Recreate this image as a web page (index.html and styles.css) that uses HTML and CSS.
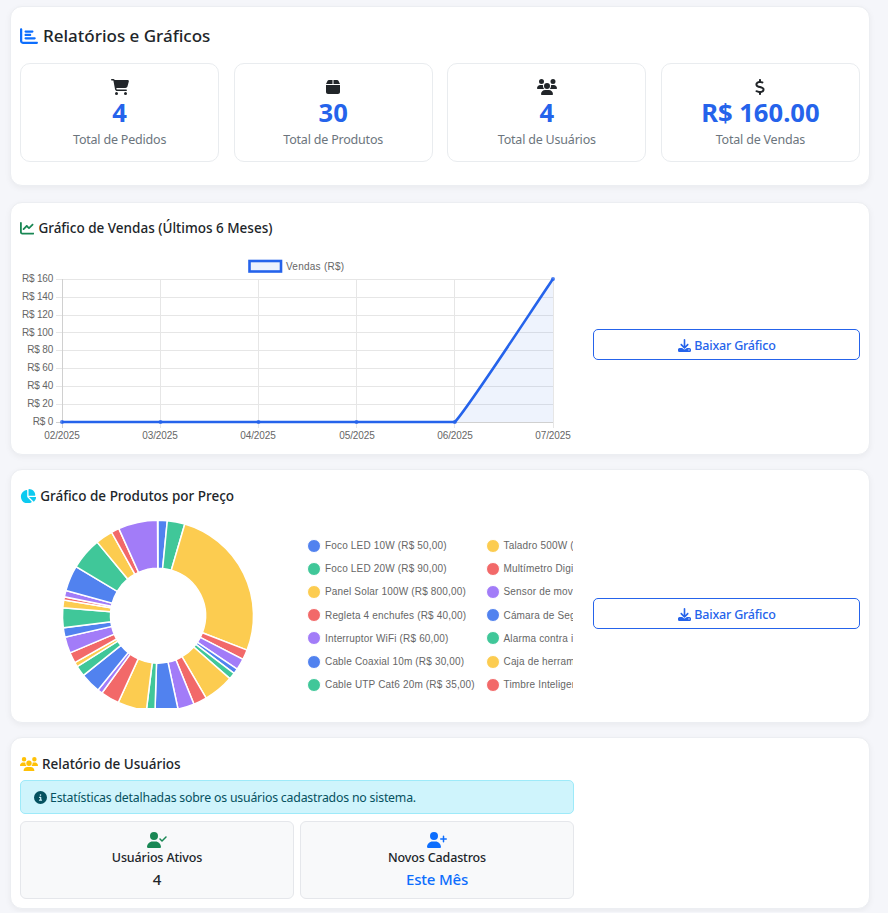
FILE: index.html
```html
<!DOCTYPE html>
<html lang="pt-BR">
<head>
  <meta charset="UTF-8">
  <title>Relatórios e Gráficos</title>
  <link rel="stylesheet" href="styles.css">
</head>
<body>

<div class="page">

  <section class="card card-summary">
    <h2 class="page-title">
      <svg class="icon text-primary" viewBox="0 0 512 512"><path d="M32 32c17.7 0 32 14.3 32 32V400c0 8.8 7.2 16 16 16H480c17.7 0 32 14.3 32 32s-14.3 32-32 32H80c-44.2 0-80-35.8-80-80V64C0 46.3 14.3 32 32 32zm96 96c0-17.7 14.3-32 32-32l192 0c17.7 0 32 14.3 32 32s-14.3 32-32 32l-192 0c-17.7 0-32-14.3-32-32zm32 64H288c17.7 0 32 14.3 32 32s-14.3 32-32 32H160c-17.7 0-32-14.3-32-32s14.3-32 32-32zm0 96H416c17.7 0 32 14.3 32 32s-14.3 32-32 32H160c-17.7 0-32-14.3-32-32s14.3-32 32-32z"/></svg>
      Relatórios e Gráficos
    </h2>
    <div class="stats">
      <div class="stat">
        <svg class="icon" viewBox="0 0 576 512"><path d="M0 24C0 10.7 10.7 0 24 0H69.5c22 0 41.5 12.8 50.6 32h411c26.3 0 45.5 25 38.6 50.4l-41 152.3c-8.5 31.4-37 53.3-69.5 53.3H170.7l5.4 28.5c2.2 11.3 12.1 19.5 23.6 19.5H488c13.3 0 24 10.7 24 24s-10.7 24-24 24H199.7c-34.6 0-64.3-24.6-70.7-58.5L77.4 54.5c-.7-3.8-4-6.5-7.9-6.5H24C10.7 48 0 37.3 0 24zM128 464a48 48 0 1 1 96 0 48 48 0 1 1 -96 0zm336-48a48 48 0 1 1 0 96 48 48 0 1 1 0-96z"/></svg>
        <div class="stat-value">4</div>
        <div class="stat-label">Total de Pedidos</div>
      </div>
      <div class="stat">
        <svg class="icon" viewBox="0 0 448 512"><path d="M50.7 58.5L0 160H208V32H93.7C75.5 32 58.9 42.3 50.7 58.5zM240 160H448L397.3 58.5C389.1 42.3 372.5 32 354.3 32H240V160zm208 32H0V416c0 35.3 28.7 64 64 64H384c35.3 0 64-28.7 64-64V192z"/></svg>
        <div class="stat-value">30</div>
        <div class="stat-label">Total de Produtos</div>
      </div>
      <div class="stat">
        <svg class="icon" viewBox="0 0 640 512"><path d="M144 0a80 80 0 1 1 0 160A80 80 0 1 1 144 0zM512 0a80 80 0 1 1 0 160A80 80 0 1 1 512 0zM0 298.7C0 239.8 47.8 192 106.7 192h42.7c15.9 0 31 3.5 44.6 9.7c-1.3 7.2-1.9 14.7-1.9 22.3c0 38.2 16.8 72.5 43.3 96c-.2 0-.4 0-.7 0H21.3C9.6 320 0 310.4 0 298.7zM405.3 320c-.2 0-.4 0-.7 0c26.6-23.5 43.3-57.8 43.3-96c0-7.6-.7-15-1.9-22.3c13.6-6.3 28.7-9.7 44.6-9.7h42.7C592.2 192 640 239.8 640 298.7c0 11.8-9.6 21.3-21.3 21.3H405.3zM224 224a96 96 0 1 1 192 0 96 96 0 1 1 -192 0zM128 485.3C128 411.7 187.7 352 261.3 352H378.7C452.3 352 512 411.7 512 485.3c0 14.7-11.9 26.7-26.7 26.7H154.7c-14.7 0-26.7-11.9-26.7-26.7z"/></svg>
        <div class="stat-value">4</div>
        <div class="stat-label">Total de Usuários</div>
      </div>
      <div class="stat">
        <svg class="icon" viewBox="0 0 320 512"><path d="M160 0c17.7 0 32 14.3 32 32V67.7c1.6 .2 3.1 .4 4.7 .7c.4 .1 .7 .1 1.1 .2l48 8.8c17.4 3.2 28.9 19.9 25.7 37.2s-19.9 28.9-37.2 25.7l-47.5-8.7c-31.3-4.6-58.9-1.5-78.3 6.2s-27.2 18.3-29 28.1c-2 10.7-.5 16.7 1.2 20.4c1.8 3.9 5.5 8.3 12.8 13.2c16.3 10.7 41.3 17.7 73.7 26.3l2.9 .8c28.6 7.6 63.6 16.8 89.6 33.8c14.2 9.3 27.6 21.9 35.9 39.5c8.5 17.9 10.3 37.9 6.4 59.2c-6.9 38-33.1 63.4-65.6 76.7c-13.7 5.6-28.6 9.2-44.4 11V480c0 17.7-14.3 32-32 32s-32-14.3-32-32V445.1c-.4-.1-.9-.1-1.3-.2l-.2 0 0 0c-24.4-3.8-64.5-14.3-91.5-26.3c-16.1-7.2-23.4-26.1-16.2-42.2s26.1-23.4 42.2-16.2c20.9 9.3 55.3 18.5 75.2 21.6c31.9 4.7 58.2 2 76-5.3c16.9-6.9 24.6-16.9 26.8-28.9c1.9-10.6 .4-16.7-1.3-20.4c-1.9-4-5.6-8.4-13-13.3c-16.4-10.7-41.5-17.7-74-26.3l-2.8-.7 0 0C119.4 279.3 84.4 270 58.4 253c-14.2-9.3-27.5-22-35.8-39.6c-8.4-17.9-10.1-37.9-6.1-59.2C23.7 116 52.3 91.2 84.8 78.3c13.3-5.3 27.9-8.9 43.2-11V32c0-17.7 14.3-32 32-32z"/></svg>
        <div class="stat-value">R$ 160.00</div>
        <div class="stat-label">Total de Vendas</div>
      </div>
    </div>
  </section>

  <section class="card card-sales">
    <h3 class="section-title">
      <svg class="icon text-success" viewBox="0 0 512 512"><path d="M64 64c0-17.7-14.3-32-32-32S0 46.3 0 64V400c0 44.2 35.8 80 80 80H480c17.7 0 32-14.3 32-32s-14.3-32-32-32H80c-8.8 0-16-7.2-16-16V64zm406.6 86.6c12.5-12.5 12.5-32.8 0-45.3s-32.8-12.5-45.3 0L320 210.7l-57.4-57.4c-12.5-12.5-32.8-12.5-45.3 0l-112 112c-12.5 12.5-12.5 32.8 0 45.3s32.8 12.5 45.3 0L240 221.3l57.4 57.4c12.5 12.5 32.8 12.5 45.3 0l128-128z"/></svg>
      Gráfico de Vendas (Últimos 6 Meses)
    </h3>
    <div class="chart-row">
      <div class="chart-col">
        <svg class="line-chart" viewBox="0 0 553 202" width="553" height="202">
          <g class="grid">
            <path d="M36 36.5H533M36 54.5H533M36 72.5H533M36 89.5H533M36 107.5H533M36 125.5H533M36 143.5H533M36 161.5H533"/>
            <path d="M140.5 36V185M238.5 36V185M336.5 36V185M434.5 36V185M533.5 36V185"/>
          </g>
          <path class="axis" d="M42.5 36V185M36 179.5H533"/>
          <rect class="legend-box" x="229.500" y="18" width="31.500" height="10.500"/>
          <text class="legend-text" x="266" y="26.500">Vendas (R$)</text>
          <g class="y-ticks">
            <text x="33" y="39">R$ 160</text>
            <text x="33" y="57">R$ 140</text>
            <text x="33" y="75">R$ 120</text>
            <text x="33" y="93">R$ 100</text>
            <text x="33" y="110">R$ 80</text>
            <text x="33" y="128">R$ 60</text>
            <text x="33" y="146">R$ 40</text>
            <text x="33" y="164">R$ 20</text>
            <text x="33" y="182">R$ 0</text>
          </g>
          <g class="x-ticks">
            <text x="42" y="196">02/2025</text>
            <text x="140" y="196">03/2025</text>
            <text x="238" y="196">04/2025</text>
            <text x="337" y="196">05/2025</text>
            <text x="435" y="196">06/2025</text>
            <text x="533" y="196">07/2025</text>
          </g>
          <path class="area" d="M434.800 179 C449 164 519 56 533 36 V179 Z"/>
          <path class="line" d="M42 179 H434.800 C449 164 519 56 533 36"/>
          <g class="points">
            <circle cx="42" cy="179" r="2"/>
            <circle cx="140.500" cy="179" r="2"/>
            <circle cx="238.500" cy="179" r="2"/>
            <circle cx="336.500" cy="179" r="2"/>
            <circle cx="434.800" cy="179" r="2"/>
            <circle cx="533" cy="36" r="2"/>
          </g>
        </svg>
      </div>
      <div class="action-col">
        <button class="btn-download" type="button">
          <svg class="icon" viewBox="0 0 512 512"><path d="M288 32c0-17.7-14.3-32-32-32s-32 14.3-32 32V274.7l-73.4-73.4c-12.5-12.5-32.8-12.5-45.3 0s-12.5 32.8 0 45.3l128 128c12.5 12.5 32.8 12.5 45.3 0l128-128c12.5-12.5 12.5-32.8 0-45.3s-32.8-12.5-45.3 0L288 274.7V32zM64 352c-35.3 0-64 28.7-64 64v32c0 35.3 28.7 64 64 64H448c35.3 0 64-28.7 64-64V416c0-35.3-28.7-64-64-64H346.5l-45.3 45.3c-25 25-65.5 25-90.5 0L165.5 352H64zm368 56a24 24 0 1 1 0 48 24 24 0 1 1 0-48z"/></svg>
          Baixar Gráfico
        </button>
      </div>
    </div>
  </section>

  <section class="card card-products">
    <h3 class="section-title">
      <svg class="icon text-info" viewBox="0 0 576 512"><path d="M304 240V16.6c0-9 7-16.6 16-16.6C443.7 0 544 100.3 544 224c0 9-7.6 16-16.6 16H304zM32 272C32 150.7 122.1 50.3 239 34.3c9.2-1.3 17 6.1 17 15.4V288L412.5 444.5c6.7 6.7 6.2 17.7-1.5 23.1C371.8 495.6 323.8 512 272 512C139.5 512 32 404.6 32 272zm526.4 16c9.3 0 16.6 7.8 15.4 17c-7.7 55.9-34.6 105.6-73.9 142.3c-6 5.6-15.4 5.2-21.2-.7L320 288H558.4z"/></svg>
      Gráfico de Produtos por Preço
    </h3>
    <div class="chart-row chart-row-products">
      <div class="chart-col donut-col">
        <svg id="donut" class="donut" viewBox="0 0 276 190" width="276" height="190"></svg>
        <ul class="legend">
          <li><i class="dot blue"></i>Foco LED 10W (R$ 50,00)</li>
          <li><i class="dot yellow"></i>Taladro 500W (R$ 150,00)</li>
          <li><i class="dot green"></i>Foco LED 20W (R$ 90,00)</li>
          <li><i class="dot red"></i>Multímetro Digital (R$ 70,00)</li>
          <li><i class="dot yellow"></i>Panel Solar 100W (R$ 800,00)</li>
          <li><i class="dot purple"></i>Sensor de movimiento (R$ 85,00)</li>
          <li><i class="dot red"></i>Regleta 4 enchufes (R$ 40,00)</li>
          <li><i class="dot blue"></i>Cámara de Seguridad (R$ 120,00)</li>
          <li><i class="dot purple"></i>Interruptor WiFi (R$ 60,00)</li>
          <li><i class="dot green"></i>Alarma contra incendios (R$ 100,00)</li>
          <li><i class="dot blue"></i>Cable Coaxial 10m (R$ 30,00)</li>
          <li><i class="dot yellow"></i>Caja de herramientas (R$ 45,00)</li>
          <li><i class="dot green"></i>Cable UTP Cat6 20m (R$ 35,00)</li>
          <li><i class="dot red"></i>Timbre Inteligente (R$ 110,00)</li>
        </ul>
      </div>
      <div class="action-col">
        <button class="btn-download" type="button">
          <svg class="icon" viewBox="0 0 512 512"><path d="M288 32c0-17.7-14.3-32-32-32s-32 14.3-32 32V274.7l-73.4-73.4c-12.5-12.5-32.8-12.5-45.3 0s-12.5 32.8 0 45.3l128 128c12.5 12.5 32.8 12.5 45.3 0l128-128c12.5-12.5 12.5-32.8 0-45.3s-32.8-12.5-45.3 0L288 274.7V32zM64 352c-35.3 0-64 28.7-64 64v32c0 35.3 28.7 64 64 64H448c35.3 0 64-28.7 64-64V416c0-35.3-28.7-64-64-64H346.5l-45.3 45.3c-25 25-65.5 25-90.5 0L165.5 352H64zm368 56a24 24 0 1 1 0 48 24 24 0 1 1 0-48z"/></svg>
          Baixar Gráfico
        </button>
      </div>
    </div>
  </section>

  <section class="card card-users">
    <h3 class="section-title">
      <svg class="icon text-warning" viewBox="0 0 640 512"><path d="M144 0a80 80 0 1 1 0 160A80 80 0 1 1 144 0zM512 0a80 80 0 1 1 0 160A80 80 0 1 1 512 0zM0 298.7C0 239.8 47.8 192 106.7 192h42.7c15.9 0 31 3.5 44.6 9.7c-1.3 7.2-1.9 14.7-1.9 22.3c0 38.2 16.8 72.5 43.3 96c-.2 0-.4 0-.7 0H21.3C9.6 320 0 310.4 0 298.7zM405.3 320c-.2 0-.4 0-.7 0c26.6-23.5 43.3-57.8 43.3-96c0-7.6-.7-15-1.9-22.3c13.6-6.3 28.7-9.7 44.6-9.7h42.7C592.2 192 640 239.8 640 298.7c0 11.8-9.6 21.3-21.3 21.3H405.3zM224 224a96 96 0 1 1 192 0 96 96 0 1 1 -192 0zM128 485.3C128 411.7 187.7 352 261.3 352H378.7C452.3 352 512 411.7 512 485.3c0 14.7-11.9 26.7-26.7 26.7H154.7c-14.7 0-26.7-11.9-26.7-26.7z"/></svg>
      Relatório de Usuários
    </h3>
    <div class="users-col">
      <div class="alert-info">
        <svg class="icon" viewBox="0 0 512 512"><path d="M256 512A256 256 0 1 0 256 0a256 256 0 1 0 0 512zM216 336h24V272H216c-13.3 0-24-10.7-24-24s10.7-24 24-24h48c13.3 0 24 10.7 24 24v88h8c13.3 0 24 10.7 24 24s-10.7 24-24 24H216c-13.3 0-24-10.7-24-24s10.7-24 24-24zm40-208a32 32 0 1 1 0 64 32 32 0 1 1 0-64z"/></svg>
        Estatísticas detalhadas sobre os usuários cadastrados no sistema.
      </div>
      <div class="user-boxes">
        <div class="user-box">
          <svg class="icon text-success" viewBox="0 0 640 512"><path d="M96 128a128 128 0 1 1 256 0A128 128 0 1 1 96 128zM0 482.3C0 383.8 79.8 304 178.3 304h91.4C368.2 304 448 383.8 448 482.3c0 16.4-13.3 29.7-29.7 29.7H29.7C13.3 512 0 498.7 0 482.3zM625 177L497 305c-9.4 9.4-24.6 9.4-33.9 0l-64-64c-9.4-9.4-9.4-24.6 0-33.9s24.6-9.4 33.9 0l47 47L591 143c9.4-9.4 24.6-9.4 33.9 0s9.4 24.6 0 33.9z"/></svg>
          <div class="user-box-label">Usuários Ativos</div>
          <div class="user-box-value">4</div>
        </div>
        <div class="user-box">
          <svg class="icon text-primary" viewBox="0 0 640 512"><path d="M96 128a128 128 0 1 1 256 0A128 128 0 1 1 96 128zM0 482.3C0 383.8 79.8 304 178.3 304h91.4C368.2 304 448 383.8 448 482.3c0 16.4-13.3 29.7-29.7 29.7H29.7C13.3 512 0 498.7 0 482.3zM504 312V248H440c-13.3 0-24-10.7-24-24s10.7-24 24-24h64V136c0-13.3 10.7-24 24-24s24 10.7 24 24v64h64c13.3 0 24 10.7 24 24s-10.7 24-24 24H552v64c0 13.3-10.7 24-24 24s-24-10.7-24-24z"/></svg>
          <div class="user-box-label">Novos Cadastros</div>
          <div class="user-box-value text-primary">Este Mês</div>
        </div>
      </div>
    </div>
  </section>

</div>

<script src="script.js"></script>
</body>
</html>
```

FILE: styles.css
```css
* {
  box-sizing: border-box;
}
body {
  margin: 0;
  background: #f5f6fa;
  color: #212529;
  font-family: 'Noto Sans', 'Open Sans', sans-serif;
  overflow: hidden;
}
.page {
  display: flex;
  flex-direction: column;
  gap: 14px;
  padding: 6px 18px 3px 10px;
}
.card {
  background: #fff;
  border: 1px solid #eceef2;
  border-radius: 12px;
  box-shadow: 0 2px 6px rgba(0, 0, 0, 0.05);
  padding: 16px 9px 9px;
}
.icon {
  height: 14.4px;
  width: auto;
  fill: currentColor;
  flex: none;
}
.text-primary { color: #0d6efd; }
.text-success { color: #198754; }
.text-info { color: #0dcaf0; }
.text-warning { color: #ffc107; }

.page-title {
  display: flex;
  align-items: center;
  gap: 5px;
  margin: 5px 0 17px;
  font-size: 17px;
  font-weight: 500;
  line-height: 20px;
}
.page-title .icon {
  height: 18px;
}
.section-title {
  display: flex;
  align-items: center;
  gap: 4px;
  margin: 0;
  font-size: 13.5px;
  font-weight: 500;
  line-height: 20px;
}

.card-summary {
  margin-bottom: 2px;
  padding-top: 14px;
  padding-bottom: 23px;
}
.card-sales {
  padding-top: 15px;
}
.stats {
  display: grid;
  grid-template-columns: repeat(4, 1fr);
  gap: 14.4px;
}
.stat {
  display: flex;
  flex-direction: column;
  align-items: center;
  height: 99px;
  padding-top: 15px;
  background: #fff;
  border: 1px solid #e9ecef;
  border-radius: 10px;
}
.stat .icon {
  height: 16px;
}
.stat-value {
  margin-top: 3px;
  color: #2563eb;
  font-size: 25.6px;
  font-weight: 700;
  line-height: 30px;
}
.stat-label {
  margin-top: 2px;
  color: #6c757d;
  font-size: 12.5px;
  letter-spacing: -0.2px;
  line-height: 20px;
}

.chart-row {
  display: flex;
  gap: 20px;
  margin-top: 5px;
}
.chart-row-products {
  margin-top: 12px;
  padding-bottom: 5px;
}
.chart-col {
  width: 553px;
  flex: none;
}
.line-chart {
  display: block;
}
.grid path {
  stroke: #e6e6e6;
  stroke-width: 1;
  fill: none;
}
.axis {
  stroke: #d0d0d0;
  stroke-width: 1;
  fill: none;
}
.legend-box {
  fill: #edf2fd;
  stroke: #2563eb;
  stroke-width: 2.6;
}
.legend-text,
.y-ticks text,
.x-ticks text {
  fill: #666;
  font-family: 'Liberation Sans', Arial, sans-serif;
  font-size: 10px;
}
.legend-text {
  letter-spacing: 0.25px;
}
.y-ticks text {
  letter-spacing: -0.2px;
  text-anchor: end;
}
.x-ticks text {
  letter-spacing: -0.1px;
  text-anchor: middle;
}
.area {
  fill: rgba(37, 99, 235, 0.08);
}
.line {
  fill: none;
  stroke: #2563eb;
  stroke-width: 2.6;
}
.points circle {
  fill: #2563eb;
  opacity: 0.8;
}

.action-col {
  flex: 1;
  display: flex;
  align-items: center;
}
.btn-download {
  display: flex;
  align-items: center;
  justify-content: center;
  gap: 3px;
  width: 100%;
  height: 31px;
  padding: 2px 0 0 1px;
  background: #fff;
  border: 1px solid #2563eb;
  border-radius: 5px;
  color: #2563eb;
  font-family: inherit;
  font-size: 12.5px;
  font-weight: 500;
  letter-spacing: -0.2px;
}
.btn-download .icon {
  height: 13px;
}

.donut-col {
  display: flex;
  overflow: hidden;
}
.donut {
  display: block;
  flex: none;
}
.legend {
  display: grid;
  grid-template-columns: 178.5px 178.5px;
  grid-auto-rows: 23.2px;
  flex: none;
  margin: 16px 0 0 11px;
  padding: 0;
  list-style: none;
  color: #666;
  font-family: 'Liberation Sans', Arial, sans-serif;
  font-size: 10px;
  letter-spacing: 0.17px;
}
.legend li {
  display: flex;
  align-items: center;
  gap: 4px;
  height: 23.2px;
  white-space: nowrap;
  overflow: hidden;
}
.dot {
  width: 14px;
  height: 14px;
  border-radius: 50%;
  border: 1px solid #fff;
  flex: none;
}
.dot.blue { background: #5182ef; }
.dot.green { background: #40c799; }
.dot.yellow { background: #fccc50; }
.dot.red { background: #f26969; }
.dot.purple { background: #a27cf8; }

.users-col {
  width: 554px;
  margin-top: 6px;
}
.alert-info {
  display: flex;
  align-items: center;
  gap: 3px;
  height: 34px;
  padding-left: 13px;
  background: #cff4fc;
  border: 1px solid #9eeaf9;
  border-radius: 5px;
  color: #055160;
  font-size: 12.3px;
  letter-spacing: -0.2px;
}
.alert-info .icon {
  height: 13px;
}
.user-boxes {
  display: grid;
  grid-template-columns: 1fr 1fr;
  gap: 6px;
  margin-top: 7px;
}
.user-box {
  display: flex;
  flex-direction: column;
  align-items: center;
  height: 78px;
  padding-top: 10px;
  background: #f8f9fa;
  border: 1px solid #e5e7eb;
  border-radius: 6px;
}
.user-box .icon {
  height: 16px;
}
.user-box-label {
  margin-top: 1px;
  font-size: 12.5px;
  font-weight: 500;
  letter-spacing: -0.15px;
  line-height: 18px;
}
.user-box-value {
  font-size: 15px;
  font-weight: 500;
  letter-spacing: -0.2px;
  line-height: 24px;
}
```

FILE: script.js
```js
// fatias do donut, em graus, no sentido horario a partir do topo
const slices = [
  5.6, 10.7, 94.8, 6.1, 6.8, 3.2, 4, 18.5, 8.2, 10,
  13.9, 5.2, 17.6, 11.3, 3, 12.4, 6.5, 2.8, 6.5, 9.9,
  5.7, 12, 4.8, 1.9, 3.9, 15.6, 19.5, 10.5, 4.9, 23.9
];
const colors = ['#5182ef', '#40c799', '#fccc50', '#f26969', '#a27cf8'];

const cx = 138;
const cy = 97.7;
const outer = 95.5;
const inner = 47.5;

function point(r, deg) {
  const rad = (deg - 90) * Math.PI / 180;
  return (cx + r * Math.cos(rad)).toFixed(2) + ' ' + (cy + r * Math.sin(rad)).toFixed(2);
}

const svg = document.getElementById('donut');
let start = 0;

slices.forEach((size, i) => {
  const end = start + size;
  const large = size > 180 ? 1 : 0;
  const d = 'M' + point(outer, start) +
    'A' + outer + ' ' + outer + ' 0 ' + large + ' 1 ' + point(outer, end) +
    'L' + point(inner, end) +
    'A' + inner + ' ' + inner + ' 0 ' + large + ' 0 ' + point(inner, start) + 'Z';
  const path = document.createElementNS('http://www.w3.org/2000/svg', 'path');
  path.setAttribute('d', d);
  path.setAttribute('fill', colors[i % colors.length]);
  path.setAttribute('stroke', '#fff');
  path.setAttribute('stroke-width', '1.5');
  svg.appendChild(path);
  start = end;
});
```
